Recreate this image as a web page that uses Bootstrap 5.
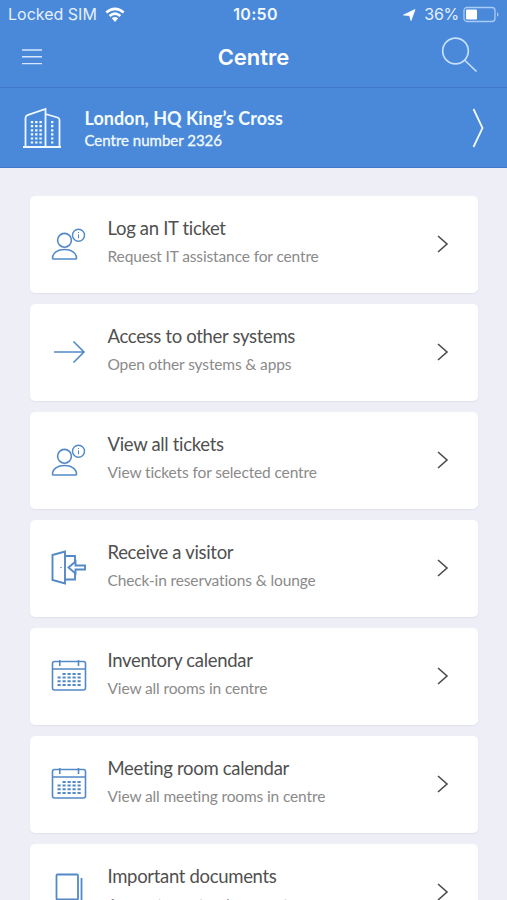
<!DOCTYPE html>
<html lang="en">
<head>
<meta charset="utf-8">
<meta name="viewport" content="width=device-width, initial-scale=1">
<title>Centre</title>
<link href="https://cdn.jsdelivr.net/npm/bootstrap@5.3.0/dist/css/bootstrap.min.css" rel="stylesheet">
<style>
body{font-family:Lato,"Open Sans",sans-serif;background:#eeeef7;height:900px}
svg{display:block;fill:none;flex:none}
.top-area{background:#4a88da;color:#fff;height:88px;border-bottom:1px solid #3e78c7}
.status-row{height:29px;font-family:Inter,sans-serif;font-size:16px;line-height:29px;color:#e4f0ff}
.status-row>div,.title-side{flex:1 1 0}
.clock{font-weight:600;color:#f2f8ff;letter-spacing:.3px}
.charge{letter-spacing:-.3px}
.title-row{height:56px}
.find svg{margin-right:29px}
.page-title{font-family:Inter,sans-serif;font-weight:600;font-size:22px;line-height:28px}
.centre-row{background:#4a88da;color:#f2fbff;height:80px;border-bottom:1px solid #3f78c6;padding:0 22px}
.centre-text{margin-left:22.5px;padding-top:2px}
.centre-name{font-size:18px;line-height:22px;font-weight:700}
.centre-no{font-size:15px;line-height:22px;-webkit-text-stroke:.3px}
.menu-list{padding:28px 29px 0 30px;gap:11px}
.menu-card{height:97px;flex:none;border:0;border-radius:5px;box-shadow:0 1px 2px rgba(60,60,110,.07);padding:0 28px 1px 20px}
.menu-text{margin-left:19.5px;padding-bottom:6px}
.menu-title{font-size:18.5px;line-height:26px;letter-spacing:-.32px;color:#505050}
.menu-sub{font-size:15.5px;line-height:22px;letter-spacing:-.13px;color:#8a8a8a;margin-top:4px}
.blue{stroke:#5489c8;stroke-width:1.6}
</style>
</head>
<body class="overflow-hidden">
<svg width="0" height="0" class="position-absolute">
<defs>
<symbol id="person" viewBox="0 0 38 38"><circle cx="14.5" cy="15.3" r="6.9"/><path d="M2.500 33.200c0-5.500 5-8.700 12-8.700s12 3.200 12 8.700q0 .8-1 .8h-22q-1 0-1-.8z"/><circle cx="28.5" cy="10.2" r="6" stroke-width="1.4"/><path d="M28.500 7v1M28.500 9.300v4" stroke-width="1"/></symbol>
<symbol id="arrow" viewBox="0 0 38 38"><path d="M4 19h30M23.500 8.500 34 19 23.500 29.500"/></symbol>
<symbol id="door" viewBox="0 0 38 38"><g stroke-width="1.9"><path d="M2.500 6 15 2.500v32L2.500 31zM15 7h10v7M25 24v6.500H15"/><path d="m18.500 18.500 7-6v4h9.500v4h-9.500v4z"/></g><circle cx="11" cy="18.500" r=".4" stroke-width="1"/></symbol>
<symbol id="calendar" viewBox="0 0 38 38"><rect x="2.5" y="4.5" width="33" height="28.5" rx="2"/><path d="M2.500 12h33M9.800 3v6M28.500 3v6"/><path d="M12.500 17h18.500M7.500 20.600h23.500M7.500 24.300h23.500M7.500 28h23.500" stroke-width="2" stroke-dasharray="3.2 1.8"/></symbol>
<symbol id="docs" viewBox="0 0 38 38"><g stroke-width="1.8"><rect x="6.5" y="1.500" width="21.5" height="25" rx="1"/><path d="M31.500 5V32H11"/></g></symbol>
<symbol id="next" viewBox="0 0 14 18"><path d="m2 1 9 8-9 8" stroke="#4c4c4c" stroke-width="1.6"/></symbol>
</defs>
</svg>
<header class="top-area">
  <div class="status-row d-flex">
    <div class="d-flex align-items-center ps-2"><span>Locked SIM</span>
      <svg class="ms-2" width="20" height="16" viewBox="0 0 20 16" stroke="#fff" stroke-width="2.5"><path d="M1.300 5.500Q10-1.800 18.700 5.500M4.600 9Q10 4.300 15.400 9"/><path d="m6.800 11.300 3.200 3.700 3.200-3.700q-3.200-2.500-6.400 0z" fill="#fff" stroke="none"/></svg></div>
    <div class="clock text-center ps-1">10:50</div>
    <div class="d-flex align-items-center justify-content-end pe-2">
      <svg class="me-2" width="14" height="14" viewBox="0 0 14 14"><path d="M13 1.500 9 12.500 7.500 7.500 1.500 7z" fill="#fff" stroke="#fff" stroke-width=".8"/></svg><span class="charge">36%</span>
      <svg class="ms-1" width="36" height="17" viewBox="0 0 36 17"><rect x="1" y="1.5" width="31" height="14" rx="3" stroke="#a9cbf5" stroke-width="1.3"/><rect x="3" y="3.5" width="11" height="10" rx="1" fill="#fff"/><path d="M34 6q3 2.500 0 5z" fill="#a9cbf5"/></svg></div>
  </div>
  <nav class="title-row d-flex align-items-center">
    <div class="title-side"><svg class="ms-4" width="16" height="20" viewBox="0 0 16 20" overflow="visible" stroke="#d5e8ff" stroke-width="1.4"><path d="M-2 3h20M-2 9.800h20M-2 16.600h20"/></svg></div>
    <div class="page-title">Centre</div>
    <div class="title-side find d-flex justify-content-end align-self-start pt-1"><svg width="38" height="40" viewBox="0 0 38 40" stroke="#c5e0ff" stroke-width="1.7"><circle cx="15.5" cy="18" r="12.8"/><path d="m24.500 27 12 11.500"/></svg></div>
  </nav>
</header>
<section class="centre-row d-flex align-items-center">
  <svg width="40" height="44" viewBox="0 0 40 44" stroke="#eefaff" stroke-width="1.8"><path d="M1 41h38M3.500 41V12q0-2 2-2.800L23.500 3v38M23.500 8l12 3.500q2 .6 2 2.500v27"/><path d="M10 15v22.500M14.300 15v22.500M18.600 15v22.500M30.200 15v22.500" stroke-width="2.4" stroke-dasharray="2.2 1.9"/></svg>
  <div class="centre-text flex-grow-1"><div class="centre-name">London, HQ King’s Cross</div><div class="centre-no">Centre number 2326</div></div>
  <svg width="14" height="42" viewBox="0 0 14 42" stroke="#effaff" stroke-width="1.8"><path d="m2.500 2 9 19-9 19"/></svg>
</section>
<main class="menu-list d-flex flex-column">
  <a class="menu-card card flex-row align-items-center text-decoration-none"><svg class="blue" width="38" height="38"><use href="#person"/></svg><div class="menu-text flex-grow-1"><div class="menu-title">Log an IT ticket</div><div class="menu-sub">Request IT assistance for centre</div></div><svg width="14" height="18"><use href="#next"/></svg></a>
  <a class="menu-card card flex-row align-items-center text-decoration-none"><svg class="blue" width="38" height="38"><use href="#arrow"/></svg><div class="menu-text flex-grow-1"><div class="menu-title">Access to other systems</div><div class="menu-sub">Open other systems &amp; apps</div></div><svg width="14" height="18"><use href="#next"/></svg></a>
  <a class="menu-card card flex-row align-items-center text-decoration-none"><svg class="blue" width="38" height="38"><use href="#person"/></svg><div class="menu-text flex-grow-1"><div class="menu-title">View all tickets</div><div class="menu-sub">View tickets for selected centre</div></div><svg width="14" height="18"><use href="#next"/></svg></a>
  <a class="menu-card card flex-row align-items-center text-decoration-none"><svg class="blue" width="38" height="38"><use href="#door"/></svg><div class="menu-text flex-grow-1"><div class="menu-title">Receive a visitor</div><div class="menu-sub">Check-in reservations &amp; lounge</div></div><svg width="14" height="18"><use href="#next"/></svg></a>
  <a class="menu-card card flex-row align-items-center text-decoration-none"><svg class="blue" width="38" height="38"><use href="#calendar"/></svg><div class="menu-text flex-grow-1"><div class="menu-title">Inventory calendar</div><div class="menu-sub">View all rooms in centre</div></div><svg width="14" height="18"><use href="#next"/></svg></a>
  <a class="menu-card card flex-row align-items-center text-decoration-none"><svg class="blue" width="38" height="38"><use href="#calendar"/></svg><div class="menu-text flex-grow-1"><div class="menu-title">Meeting room calendar</div><div class="menu-sub">View all meeting rooms in centre</div></div><svg width="14" height="18"><use href="#next"/></svg></a>
  <a class="menu-card card flex-row align-items-center text-decoration-none"><svg class="blue" width="38" height="38"><use href="#docs"/></svg><div class="menu-text flex-grow-1"><div class="menu-title">Important documents</div><div class="menu-sub">Access to centre documents</div></div><svg width="14" height="18"><use href="#next"/></svg></a>
</main>
<script src="https://cdn.jsdelivr.net/npm/bootstrap@5.3.0/dist/js/bootstrap.bundle.min.js"></script>
</body>
</html>
